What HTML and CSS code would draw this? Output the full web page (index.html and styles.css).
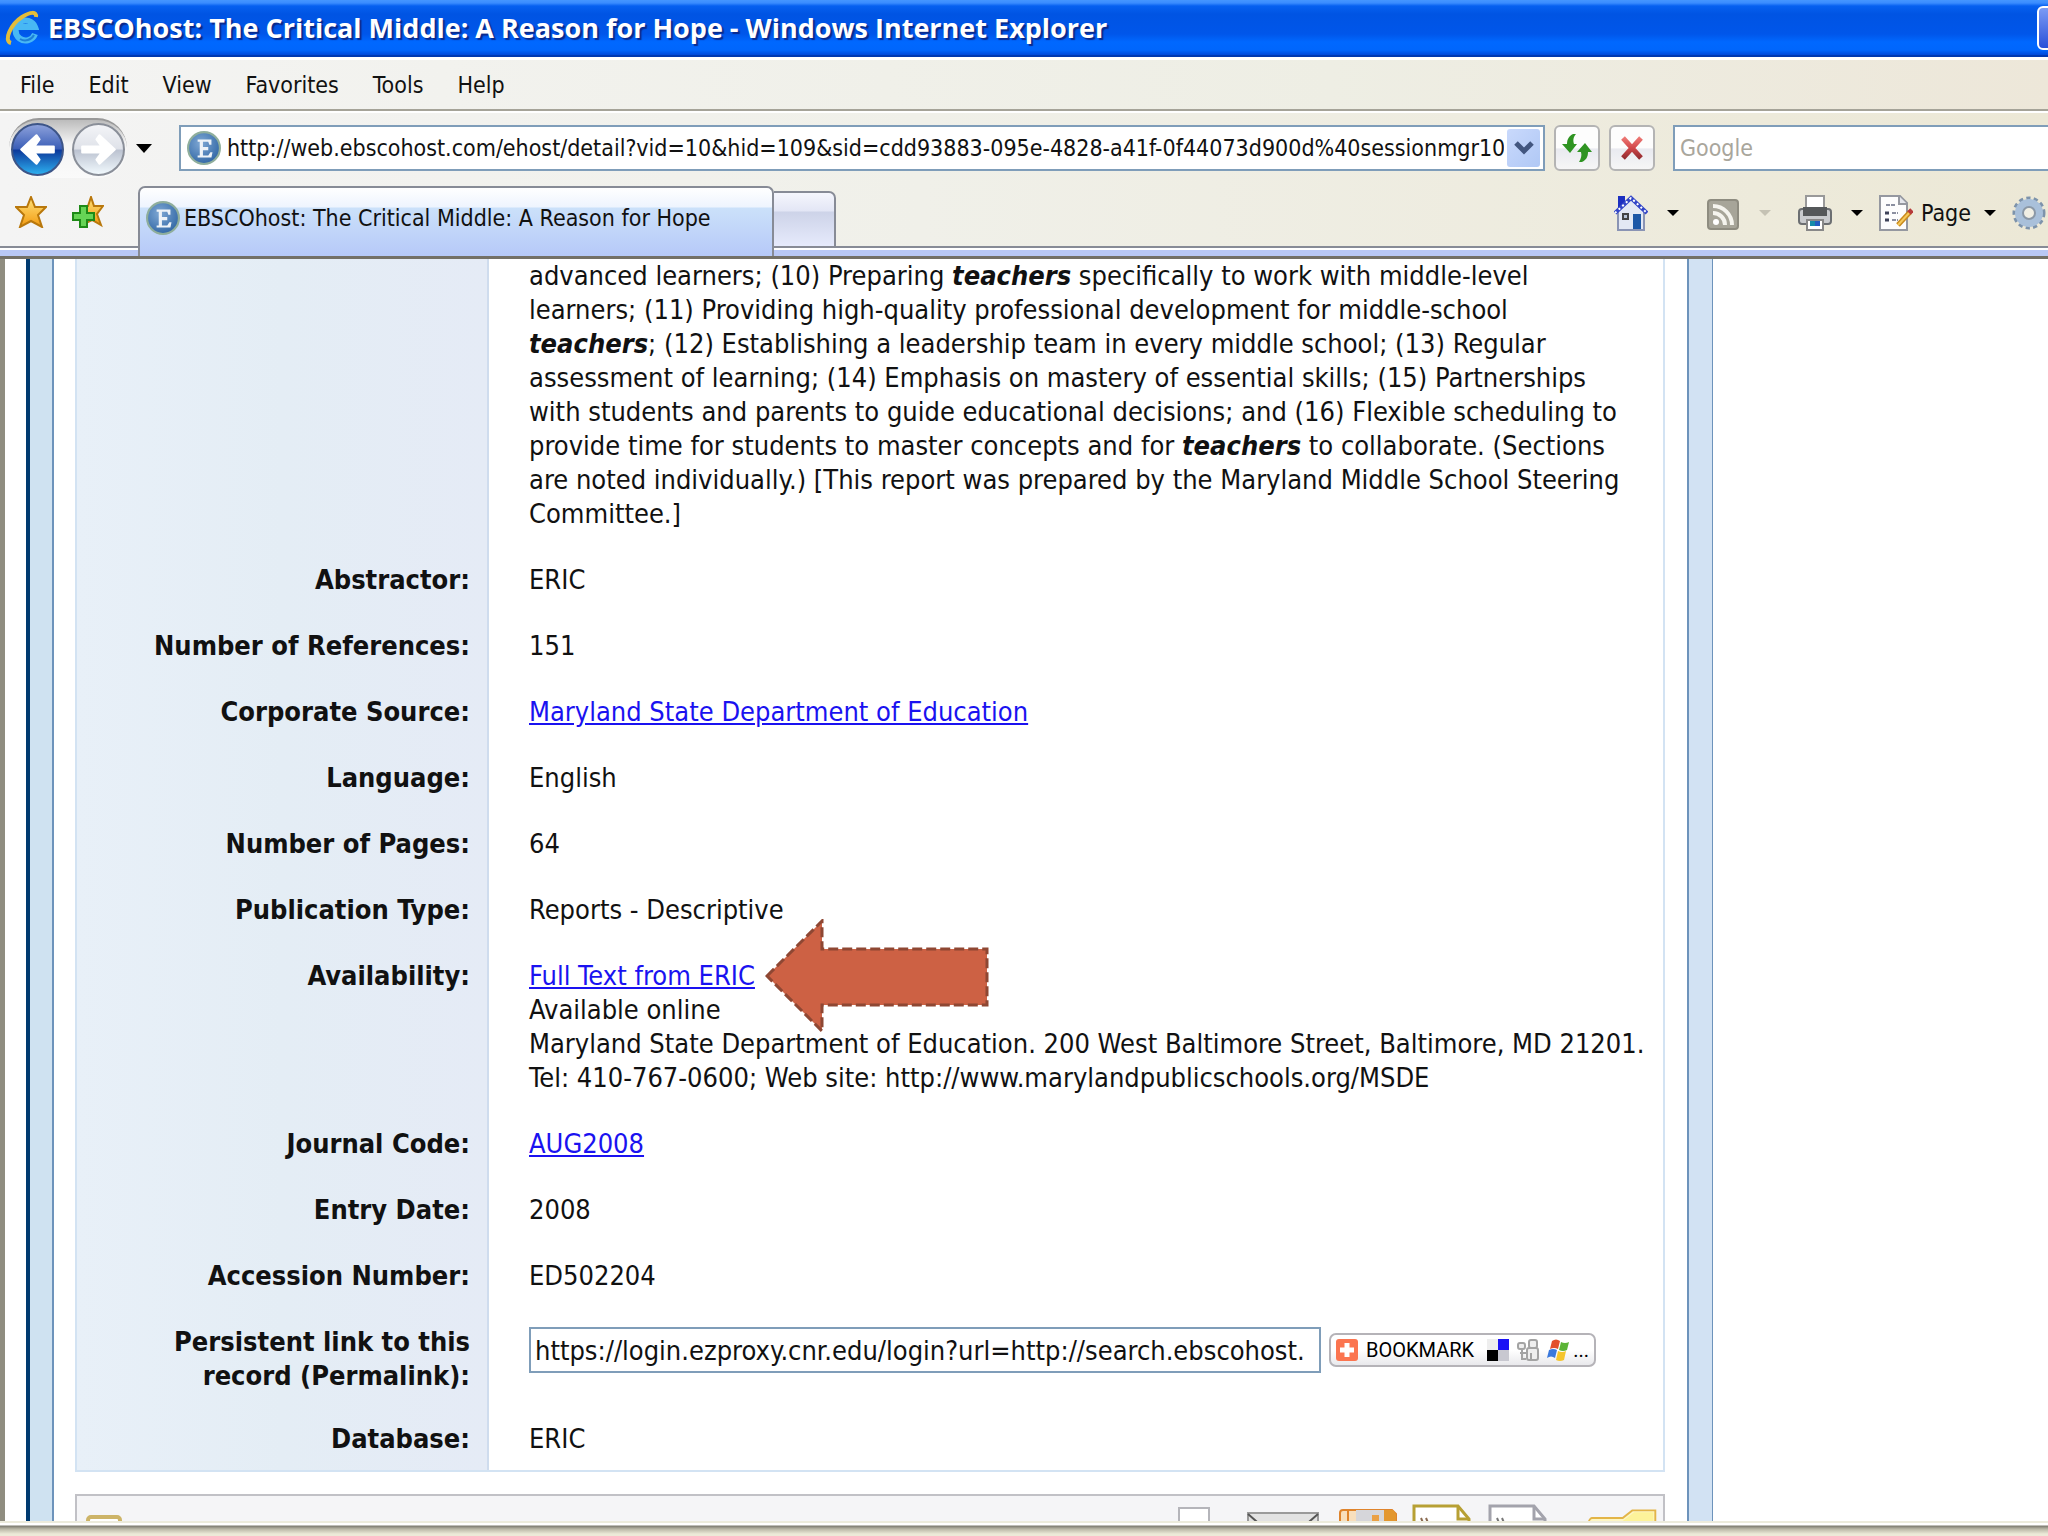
FILE: index.html
```
<!DOCTYPE html>
<html lang="en">

<head>
    <meta charset="UTF-8">
    <meta name="viewport" content="width=device-width, initial-scale=1.0">
    <title>EBSCOhost: The Critical Middle: A Reason for Hope</title>
    <link rel="stylesheet" href="styles.css">
</head>

<body>
    <!-- Shared icons -->
    <svg class="sprite" aria-hidden="true">
        <defs>
            <radialGradient id="ball" cx="40%" cy="35%" r="70%">
                <stop offset="0" stop-color="#7fa8d4" />
                <stop offset="1" stop-color="#2f65a4" />
            </radialGradient>
            <linearGradient id="gold" x1="0" y1="0" x2="0" y2="1">
                <stop offset="0" stop-color="#ffe27a" />
                <stop offset="1" stop-color="#f29a10" />
            </linearGradient>
            <linearGradient id="back" x1="0" y1="0" x2="0" y2="1">
                <stop offset="0" stop-color="#8fa3dc" />
                <stop offset="0.48" stop-color="#3c5fb8" />
                <stop offset="0.52" stop-color="#0c3a9c" />
                <stop offset="1" stop-color="#2fb4f2" />
            </linearGradient>
            <linearGradient id="forward" x1="0" y1="0" x2="0" y2="1">
                <stop offset="0" stop-color="#f4f5f8" />
                <stop offset="0.48" stop-color="#dfe2e9" />
                <stop offset="0.52" stop-color="#bcc3d1" />
                <stop offset="1" stop-color="#f3fbff" />
            </linearGradient>
            <linearGradient id="stop" gradientUnits="userSpaceOnUse" x1="0" y1="4" x2="0" y2="26">
                <stop offset="0" stop-color="#ee7a76" />
                <stop offset="0.5" stop-color="#d2474a" />
                <stop offset="1" stop-color="#8e2a2e" />
            </linearGradient>
        </defs>
        <symbol id="favicon" viewBox="0 0 32 32">
            <circle cx="16" cy="16" r="15" fill="url(#ball)" stroke="#8fae9c" stroke-width="2" />
            <path d="M10 8h13v5h-2l-1-3h-5v5h5v3h-5v5h5l2-3h2l-1 5H10v-2h2V10h-2z" fill="#eef3f8" />
        </symbol>
    </svg>

    <!-- Title bar -->
    <header class="title-bar">
        <svg class="ie-logo" viewBox="0 0 34 36">
            <path d="M30 24a10 10 0 1 1 0-7H13" fill="none" stroke="#48b8f4" stroke-width="6" />
            <path d="M29 25a10 10 0 0 1-14 4" fill="none" stroke="#1c7fd8" stroke-width="2" />
            <path d="M6 33C-2 31 6 14 17 7c8-5 15-6 14 0" fill="none" stroke="#e2bd3a" stroke-width="4" />
        </svg>
        <h1 class="window-title">EBSCOhost: The Critical Middle: A Reason for Hope - Windows Internet Explorer</h1>
        <button class="minimize" aria-label="Minimize"></button>
    </header>

    <!-- Menu -->
    <nav class="menu-bar">
        <button>File</button>
        <button>Edit</button>
        <button>View</button>
        <button>Favorites</button>
        <button>Tools</button>
        <button>Help</button>
    </nav>

    <!-- Address row -->
    <div class="toolbars">
        <div class="address-row">
            <div class="history">
                <button aria-label="Back">
                    <svg viewBox="0 0 52 52">
                        <circle cx="26" cy="26" r="25" fill="url(#back)" stroke="#3d5588" stroke-width="2" />
                        <path d="M10 26L25 12l3 4-5 7h19v6H23l5 7-3 4z" fill="#fff" stroke="#fff" stroke-width="2" stroke-linejoin="round" />
                    </svg>
                </button>
                <button aria-label="Forward">
                    <svg viewBox="0 0 52 52">
                        <circle cx="26" cy="26" r="25" fill="url(#forward)" stroke="#8a8f99" stroke-width="2" />
                        <path d="M42 26L27 12l-3 4 5 7H10v6h19l-5 7 3 4z" fill="#fff" stroke="#fff" stroke-width="2" stroke-linejoin="round" />
                    </svg>
                </button>
            </div>
            <button class="history-menu" aria-label="Recent pages"><span class="caret"></span></button>
            <div class="address">
                <svg class="favicon"><use href="#favicon" /></svg>
                <input class="address-input" aria-label="Address" value="http://web.ebscohost.com/ehost/detail?vid=10&amp;hid=109&amp;sid=cdd93883-095e-4828-a41f-0f44073d900d%40sessionmgr109">
                <button class="address-drop" aria-label="Show addresses">
                    <svg viewBox="0 0 20 14"><path d="M2 2l8 8 8-8" fill="none" stroke="#42567f" stroke-width="5" /></svg>
                </button>
            </div>
            <button class="tool-button" aria-label="Refresh">
                <svg viewBox="0 0 32 30">
                    <path d="M12 1h3c-3 3-3 7-2 10h3l-7 9-8-9h5c0-5 2-8 6-10z" fill="#2f9422" />
                    <path d="M21 29h-3c2-3 3-7 2-10h-4l8-9 7 9h-4c0 5-2 8-6 10z" fill="#2f9422" />
                </svg>
            </button>
            <button class="tool-button" aria-label="Stop">
                <svg viewBox="0 0 32 30">
                    <path d="M7 5l18 20M25 5L7 25" stroke="url(#stop)" stroke-width="5" />
                </svg>
            </button>
            <input class="search" type="search" aria-label="Search" placeholder="Google">
        </div>

        <!-- Tabs and commands -->
        <div class="tab-row">
            <div class="favorites">
                <button aria-label="Favorites center">
                    <svg viewBox="0 0 32 32"><path d="M16 1l4 10h11l-8 8 4 12-11-6-11 6 4-12-8-8h11z" fill="url(#gold)" stroke="#b9780c" stroke-width="2" /></svg>
                </button>
                <button aria-label="Add to favorites">
                    <svg viewBox="0 0 32 32">
                        <path d="M19 1l3 9h9l-6 8 4 11-9-5-8 4 2-11-5-7h7z" fill="url(#gold)" stroke="#b9780c" stroke-width="2" />
                        <path d="M8 10h7v7h7v7h-7v7H8v-7H1v-7h7z" fill="#66d455" stroke="#1e8a17" stroke-width="2" />
                    </svg>
                </button>
            </div>
            <button class="tab">
                <svg class="favicon"><use href="#favicon" /></svg>
                <span>EBSCOhost: The Critical Middle: A Reason for Hope</span>
            </button>
            <button class="new-tab" aria-label="New tab"></button>
            <div class="commands">
                <button class="command spaced" aria-label="Home">
                    <svg viewBox="0 0 34 36">
                        <path d="M4 16L17 4l13 12v19H4z" fill="#e3e8f4" stroke="#8a94b4" stroke-width="2" />
                        <path d="M4 1h7v7l-7 6z" fill="#1c2fc0" />
                        <path d="M1 18L17 3l16 15" fill="none" stroke="#3346c8" stroke-width="4" />
                        <path d="M1 18L17 3l16 15" fill="none" stroke="#fff" stroke-width="2" stroke-dasharray="2 3" />
                        <rect x="19" y="19" width="8" height="15" fill="#1c57a6" />
                        <rect x="9" y="19" width="5" height="5" fill="#b8c4d6" stroke="#444" stroke-width="2" />
                    </svg>
                    <span class="caret small"></span>
                </button>
                <button class="command spaced" aria-label="Feeds" disabled>
                    <svg viewBox="0 0 34 36">
                        <rect x="2" y="5" width="30" height="29" rx="3" fill="#a7a599" stroke="#8e8c80" stroke-width="2" />
                        <circle cx="10" cy="27" r="3" fill="#fff" />
                        <path d="M7 18a12 12 0 0 1 12 12M7 11a19 19 0 0 1 19 19" fill="none" stroke="#f5f4ee" stroke-width="4" />
                    </svg>
                    <span class="caret small"></span>
                </button>
                <button class="command" aria-label="Print">
                    <svg viewBox="0 0 34 36">
                        <path d="M8 1h18v13H8z" fill="#fff" stroke="#999" stroke-width="2" />
                        <rect x="1" y="14" width="32" height="15" rx="3" fill="#c9cbce" stroke="#6c6f72" stroke-width="2" />
                        <path d="M5 12h24v9H5z" fill="#55585a" />
                        <path d="M9 25h16v10H9z" fill="#fff" stroke="#888" stroke-width="2" />
                        <path d="M12 26h5v5h-5z" fill="#168ba8" />
                        <path d="M17 26h5v5h-5z" fill="#235cc0" />
                    </svg>
                    <span class="caret small"></span>
                </button>
                <button class="command page-command">
                    <svg viewBox="0 0 34 36">
                        <path d="M1 1h20l7 7v27H1z" fill="#fdfdfd" stroke="#9598a0" stroke-width="2" />
                        <path d="M20 1v8h8" fill="#e4e6ec" stroke="#9598a0" stroke-width="2" />
                        <path d="M7 10h9M13 18h6M13 25h6" stroke="#8b8fa0" stroke-width="2" stroke-dasharray="4 1" />
                        <path d="M6 18h4M6 25h4" stroke="#3e4258" stroke-width="3" />
                        <path d="M19 30l12-13" stroke="#c98a1c" stroke-width="5" />
                        <path d="M19 30l12-13" stroke="#f5c95a" stroke-width="2" />
                        <path d="M30 18l3-3" stroke="#b63a3a" stroke-width="5" />
                    </svg>
                    <span>Page</span>
                    <span class="caret small"></span>
                </button>
                <button class="command" aria-label="Tools">
                    <svg viewBox="0 0 34 36">
                        <circle cx="17" cy="18" r="14" fill="none" stroke="#7d93ab" stroke-width="5" stroke-dasharray="4 3" />
                        <circle cx="17" cy="18" r="10" fill="#f1efe4" stroke="#a9c0da" stroke-width="8" />
                        <circle cx="17" cy="18" r="6" fill="none" stroke="#8b98a6" stroke-width="2" />
                    </svg>
                </button>
            </div>
        </div>
    </div>

    <!-- Page content -->
    <main class="viewport">
        <div class="page">
            <table class="record">
                <tr>
                    <th></th>
                    <td>advanced learners; (10) Preparing <em>teachers</em> specifically to work with middle-level<br>
                        learners; (11) Providing high-quality professional development for middle-school<br>
                        <em>teachers</em>; (12) Establishing a leadership team in every middle school; (13) Regular<br>
                        assessment of learning; (14) Emphasis on mastery of essential skills; (15) Partnerships<br>
                        with students and parents to guide educational decisions; and (16) Flexible scheduling to<br>
                        provide time for students to master concepts and for <em>teachers</em> to collaborate. (Sections<br>
                        are noted individually.) [This report was prepared by the Maryland Middle School Steering<br>
                        Committee.]</td>
                </tr>
                <tr>
                    <th scope="row">Abstractor:</th>
                    <td>ERIC</td>
                </tr>
                <tr>
                    <th scope="row">Number of References:</th>
                    <td>151</td>
                </tr>
                <tr>
                    <th scope="row">Corporate Source:</th>
                    <td><a href="#">Maryland State Department of Education</a></td>
                </tr>
                <tr>
                    <th scope="row">Language:</th>
                    <td>English</td>
                </tr>
                <tr>
                    <th scope="row">Number of Pages:</th>
                    <td>64</td>
                </tr>
                <tr>
                    <th scope="row">Publication Type:</th>
                    <td>Reports - Descriptive</td>
                </tr>
                <tr>
                    <th scope="row">Availability:</th>
                    <td><span class="callout"><a href="#">Full Text from ERIC</a>
                            <svg class="arrow" viewBox="0 0 224 114">
                                <path d="M2 57L57 2v28h165v56H57v26z" fill="#cd6144" stroke="#8e4733" stroke-width="3" stroke-dasharray="10 4" />
                            </svg></span><br>
                        Available online<br>
                        Maryland State Department of Education. 200 West Baltimore Street, Baltimore, MD 21201.<br>
                        Tel: 410-767-0600; Web site: http://www.marylandpublicschools.org/MSDE</td>
                </tr>
                <tr>
                    <th scope="row">Journal Code:</th>
                    <td><a href="#">AUG2008</a></td>
                </tr>
                <tr>
                    <th scope="row">Entry Date:</th>
                    <td>2008</td>
                </tr>
                <tr>
                    <th scope="row">Accession Number:</th>
                    <td>ED502204</td>
                </tr>
                <tr class="permalink-row">
                    <th scope="row"><label for="permalink">Persistent link to this<br>record (Permalink):</label></th>
                    <td>
                        <div class="permalink">
                            <input id="permalink" value="https://login.ezproxy.cnr.edu/login?url=http://search.ebscohost.">
                            <button class="bookmark">
                                <svg viewBox="0 0 22 22">
                                    <rect width="22" height="22" rx="3" fill="#fb7550" />
                                    <path d="M11 4v14M4 11h14" stroke="#fff" stroke-width="5" />
                                </svg>
                                <span class="bookmark-text">BOOKMARK</span>
                                <svg viewBox="0 0 22 22">
                                    <rect width="11" height="11" fill="#eee" />
                                    <rect x="11" width="11" height="11" fill="#1b12f5" />
                                    <rect y="11" width="11" height="11" fill="#000" />
                                    <rect x="11" y="11" width="11" height="11" fill="#c8c8d0" />
                                </svg>
                                <svg viewBox="0 0 22 22" fill="#eee" stroke="#a3a3a3" stroke-width="2">
                                    <rect x="1" y="4" width="7" height="6" rx="2" />
                                    <rect x="12" y="1" width="8" height="8" rx="2" />
                                    <rect x="10" y="9" width="11" height="12" rx="2" />
                                    <path d="M5 10v10h4M3 14h6M14 14v6" />
                                </svg>
                                <svg viewBox="0 0 22 22">
                                    <path d="M5 2q4-3 8 0l-2 8q-4-2-8 0z" fill="#e2502a" />
                                    <path d="M14 3q4 2 8 0l-2 8q-4 2-8 0z" fill="#5cb437" />
                                    <path d="M2 11q4-2 8 0l-2 8q-4-3-8 0z" fill="#3a78dc" />
                                    <path d="M11 12q4 2 8 0l-2 9q-4 2-8 0z" fill="#f5c52c" />
                                </svg>
                                <span class="more">...</span>
                            </button>
                        </div>
                    </td>
                </tr>
                <tr>
                    <th scope="row">Database:</th>
                    <td>ERIC</td>
                </tr>
            </table>

            <!-- Record tools -->
            <div class="record-tools">
                <svg class="note" viewBox="0 0 36 24"><rect x="2" y="2" width="32" height="30" rx="3" fill="#fff" stroke="#cdb468" stroke-width="4" /></svg>
                <svg class="tool tool-first tool-spaced" viewBox="0 0 64 32">
                    <path d="M13 4h30v30H13z" fill="#fff" stroke="#b5b5ba" stroke-width="2" />
                    <path d="M42 17l-8 4h8z" fill="#ccc" />
                </svg>
                <svg class="tool tool-wide tool-spaced" viewBox="0 0 76 32">
                    <path d="M3 9h70v24H3z" fill="#e2e2e2" stroke="#9a9a9a" stroke-width="2" />
                    <path d="M3 10l16 14M73 10L57 24" stroke="#555" stroke-width="2" />
                </svg>
                <svg class="tool" viewBox="0 0 64 32">
                    <path d="M4 34V9q0-3 3-3h49l4 4v24z" fill="#f8dfbd" stroke="#df842c" stroke-width="2" />
                    <path d="M12 6v26" stroke="#df842c" stroke-width="2" />
                    <path d="M20 6h28v26H20z" fill="#d6d6da" />
                    <path d="M36 11h7v20h-7z" fill="#eaa044" />
                    <path d="M48 6h9l3 4v22H48z" fill="#e3972f" />
                </svg>
                <svg class="tool tool-wide" viewBox="0 0 76 32">
                    <path d="M14 34V2h44l11 13v19" fill="#fff" stroke="#b7a034" stroke-width="3" />
                    <path d="M58 2v13h11" fill="none" stroke="#b7a034" stroke-width="3" />
                    <path d="M21 14l3 7M26 14l3 7" stroke="#8a6a50" stroke-width="2" />
                </svg>
                <svg class="tool tool-wide tool-spaced" viewBox="0 0 76 32">
                    <path d="M14 34V2h44l11 13v19" fill="#fff" stroke="#a3a3ac" stroke-width="3" />
                    <path d="M58 2v13h11" fill="none" stroke="#a3a3ac" stroke-width="3" />
                    <path d="M21 14l3 7M26 14l3 7" stroke="#777" stroke-width="2" />
                </svg>
                <svg class="tool tool-last" viewBox="0 0 100 32">
                    <path d="M18 34q4-20 8-20h32l10-8h24v28z" fill="#fdf6c4" stroke="#e3b548" stroke-width="2" />
                    <path d="M58 17l12-9h20v24H58z" fill="#fdf39a" />
                </svg>
            </div>
        </div>
    </main>

    <footer class="status-bar"></footer>
</body>

</html>
```
FILE: styles.css
```
/* General Styles */
* {
    box-sizing: border-box;
}

body {
    font-family: "DejaVu Sans Condensed", "DejaVu Sans", Tahoma, sans-serif;
    font-size: 23px;
    color: #111;
    margin: 0;
    height: 100vh;
    display: flex;
    flex-direction: column;
    overflow: hidden;
    background-color: #fff;
}

button,
input {
    font: inherit;
    color: inherit;
    margin: 0;
    padding: 0;
    border: none;
    background: none;
    border-radius: 0;
    outline: none;
}

svg {
    display: block;
    flex: none;
}

.sprite {
    position: absolute;
    width: 0;
    height: 0;
}

.caret {
    border: 8px solid transparent;
    border-top: 9px solid #000;
    border-bottom: none;
}

.caret.small {
    border-width: 6px;
    border-bottom: none;
}

.favicon {
    width: 34px;
    height: 34px;
}

/* Title Bar */
.title-bar {
    flex: none;
    display: flex;
    align-items: center;
    height: 57px;
    padding-left: 5px;
    overflow: hidden;
    border-bottom: 2px solid #0038b0;
    background: linear-gradient(to bottom, #4596ff 0, #3a8cff 3px, #0660f0 6px, #0054e3 14px, #0056ea 34px, #0068ff 42px, #0066fc 50px, #0048d8 55px);
}

.ie-logo {
    width: 34px;
    height: 36px;
}

.window-title {
    flex: 1;
    margin: 0 0 0 9px;
    font-family: "Open Sans", sans-serif;
    font-size: 27px;
    font-weight: bold;
    line-height: 36px;
    white-space: nowrap;
    color: #fff;
    text-shadow: 2px 2px 1px #0a2a8c;
}

.minimize {
    width: 46px;
    height: 44px;
    margin-right: -35px;
    border: 2px solid #fff;
    border-radius: 6px;
    background: linear-gradient(to bottom, #7a9bf5, #2a50d8);
}

/* Menu Bar */
.menu-bar {
    flex: none;
    display: flex;
    gap: 34px;
    height: 54px;
    padding-left: 20px;
    border-top: 3px solid #fff;
    border-bottom: 2px solid #a5a398;
    background: linear-gradient(to right, #f4f4f3, #eeeee4 65%, #ede7d9);
}

/* Toolbars */
.toolbars {
    flex: none;
    border-top: 2px solid #fff;
    background: linear-gradient(to right, #f4f4f4, #f0f0e9 45%, #ece8d6);
}

.address-row {
    display: flex;
    align-items: center;
    height: 70px;
    padding-left: 9px;
}

.history {
    display: flex;
    gap: 8px;
    padding: 3px 2px 2px;
    border-radius: 32px;
    border-top: 2px solid #999;
    background: linear-gradient(to bottom, #bcbcbc, #f4f4f4 40%, #fafafa);
}

.history svg {
    width: 53px;
    height: 53px;
}

.history-menu {
    display: flex;
    margin: 0 27px 0 9px;
}

.address {
    flex: 1;
    min-width: 0;
    display: flex;
    align-items: center;
    height: 46px;
    padding: 2px 3px 2px 6px;
    border: 2px solid #7f9db9;
    background-color: #fff;
}

.address-input {
    flex: 1;
    min-width: 0;
    height: 38px;
    margin: 0 3px 0 6px;
}

.address-drop {
    display: flex;
    align-items: center;
    justify-content: center;
    width: 33px;
    height: 38px;
    border-radius: 3px;
    background: linear-gradient(to bottom right, #c9d9fc, #b0c8f5);
}

.address-drop svg {
    width: 20px;
    height: 14px;
}

.tool-button {
    display: flex;
    align-items: center;
    justify-content: center;
    width: 46px;
    height: 46px;
    margin-left: 9px;
    border: 2px solid #b4b4b4;
    border-radius: 6px;
    background: linear-gradient(to bottom, #fdfdfd 50%, #e9eaf0 52%, #f6f6f6);
}

.tool-button svg {
    width: 32px;
    height: 30px;
}

.search {
    width: 375px;
    height: 46px;
    margin-left: 18px;
    padding-left: 5px;
    border: 2px solid #7f9db9;
    border-right: none;
    background-color: #fff;
}

.search::placeholder {
    color: #a9a69c;
    opacity: 1;
}

/* Tab Row */
.tab-row {
    display: flex;
    align-items: flex-end;
    height: 76px;
    border-bottom: 3px solid #737067;
    background: linear-gradient(to bottom, transparent 63px, #878b96 63px, #878b96 65px, #fff 65px, #fff 67px, #b9c8f5 67px);
}

.favorites {
    display: flex;
    gap: 25px;
    width: 138px;
    padding: 0 0 28px 15px;
}

.favorites svg {
    width: 32px;
    height: 32px;
}

.tab {
    display: flex;
    align-items: center;
    gap: 4px;
    width: 636px;
    height: 70px;
    padding: 0 0 9px 6px;
    white-space: nowrap;
    border: 2px solid #878b96;
    border-bottom: none;
    border-radius: 7px 7px 0 0;
    background: linear-gradient(to bottom, #fff, #eef4fe 19px, #cbe1fa 20px, #b6c9f8);
}

.new-tab {
    width: 62px;
    height: 57px;
    margin-bottom: 8px;
    border: 2px solid #878b96;
    border-left: none;
    border-radius: 0 7px 0 0;
    background: linear-gradient(to bottom, #f5f6fd, #e3e6f5 18px, #cdd3e8 19px, #e6eafc);
}

.commands {
    display: flex;
    gap: 16px;
    margin-left: auto;
    padding: 0 2px 25px 0;
}

.command {
    display: flex;
    align-items: center;
    gap: 19px;
}

.command svg {
    width: 34px;
    height: 36px;
}

.command:disabled .caret {
    border-top-color: #c5c2b4;
}

.spaced {
    margin-right: 11px;
}

.page-command {
    gap: 8px;
}

.page-command .caret {
    margin-left: 5px;
}

/* Page */
.viewport {
    flex: 1;
    min-height: 0;
    overflow: hidden;
    padding: 0 335px 0 21px;
    border-left: 5px solid #8f8d80;
    background-color: #fff;
}

.page {
    padding: 0 47px 0 45px;
    border-left: 4px solid #003a70;
    border-right: 1px solid #6d93bb;
    background: linear-gradient(to right, #cfe2f1 22px, #6d93bb 22px, #6d93bb 24px, #fff 24px, #fff calc(100% - 25px), #6d93bb calc(100% - 25px), #6d93bb calc(100% - 23px), #d2e2f3 calc(100% - 23px));
}

.record {
    width: 100%;
    border-collapse: separate;
    border-spacing: 0;
    font-size: 27px;
    line-height: 34px;
    border: 2px solid #d3e3f3;
    border-top: none;
}

.record th,
.record td {
    padding: 16px 0;
    vertical-align: top;
    white-space: nowrap;
}

.record th {
    width: 412px;
    padding-right: 17px;
    text-align: right;
    border-right: 2px solid #cfdcee;
    background: linear-gradient(to right, #e8f0f8, #e4edf5 50%, #e5ebf6);
}

.record td {
    padding-left: 40px;
}

.record tr:first-child td {
    padding-top: 0;
}

.record tr:last-child th,
.record tr:last-child td {
    padding-bottom: 14px;
}

.record em {
    font-weight: bold;
}

.record a {
    color: #1a12f0;
}

.callout {
    position: relative;
}

/* Points at the full text link */
.arrow {
    position: absolute;
    left: 100%;
    top: 50%;
    width: 224px;
    height: 114px;
    margin-left: 10px;
    transform: translateY(-50%);
}

.record .permalink-row th {
    padding-bottom: 13px;
}

.record .permalink-row td {
    padding: 18px 0 0 40px;
}

.permalink {
    display: flex;
    align-items: center;
    gap: 8px;
}

.permalink input {
    width: 792px;
    height: 46px;
    padding: 0 4px;
    border: 2px solid #7f9db9;
}

.bookmark {
    display: flex;
    align-items: center;
    gap: 8px;
    width: 267px;
    height: 34px;
    padding: 0 5px;
    font-family: Roboto, sans-serif;
    font-size: 20px;
    line-height: 24px;
    color: #000;
    border: 2px solid #b5b3b8;
    border-radius: 7px;
    background: linear-gradient(to bottom, #fff 50%, #e9e9ec);
}

.bookmark svg {
    width: 22px;
    height: 22px;
}

.bookmark-text {
    flex: 1;
    text-align: left;
}

.more {
    margin-left: -4px;
}

/* Record Tools */
.record-tools {
    display: flex;
    align-items: flex-start;
    height: 60px;
    margin-top: 22px;
    border: 2px solid #c1c1c6;
    background-color: #f5f5f7;
}

.note {
    width: 36px;
    height: 24px;
    margin: 19px 0 0 9px;
}

.tool {
    width: 64px;
    height: 32px;
    margin-top: 8px;
}

.tool-first {
    margin-left: auto;
}

.tool-wide {
    width: 76px;
}

.tool-spaced {
    margin-right: 15px;
}

.tool-last {
    width: 96px;
}

/* Status Bar */
.status-bar {
    flex: none;
    height: 15px;
    background: linear-gradient(to bottom, #ecebdc 2px, #fff 2px, #fff 4px, #7d7b70 5px, #b9b7a6 8px, #ecead8 13px);
}
```
